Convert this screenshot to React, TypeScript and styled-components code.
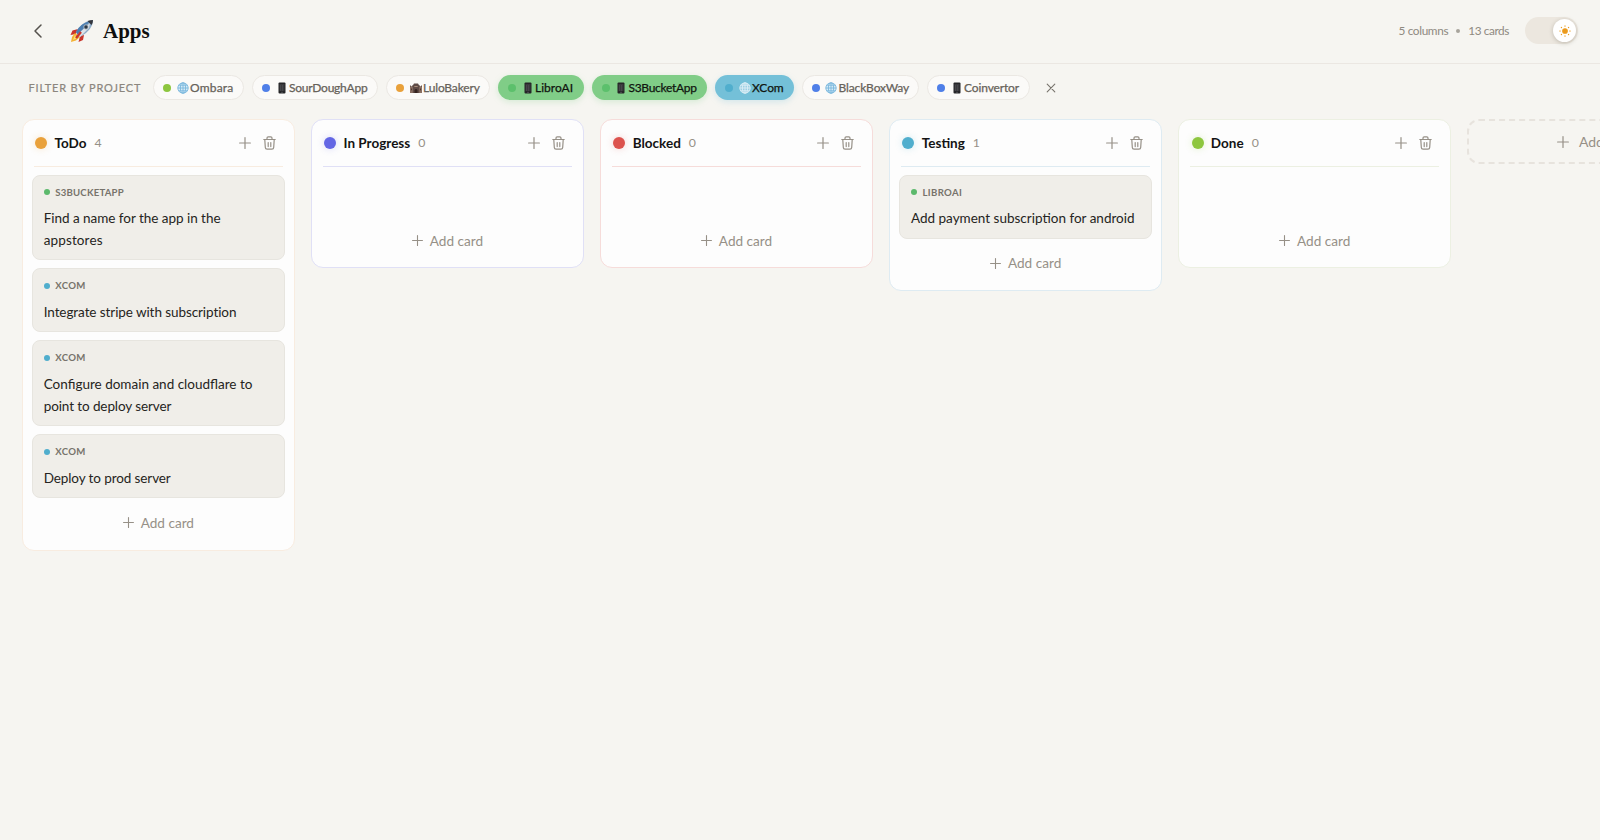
import React from "react";
import styled, { createGlobalStyle } from "styled-components";

const Global = createGlobalStyle`
  * { box-sizing: border-box; }
  body { margin: 0; background: #f6f5f1; font-family: Lato, sans-serif; overflow: hidden; }
  button { border: 0; background: none; padding: 0; font: inherit; color: inherit; display: flex; align-items: center; }
  svg { display: block; flex: none; }
`;

const Page = styled.div`
  height: 840px;
  width: 1600px;
  overflow: hidden;
  background: #f6f5f1;
`;
const Header = styled.header`
  height: 64px;
  border-bottom: 1px solid #ebe7e2;
  display: flex;
  align-items: center;
  padding: 0 22.5px 2px 30px;
`;
const Back = styled.button`
  width: 40px;
  color: #55524d;
`;
const Title = styled.h1`
  margin: 0 auto 0 9px;
  font: bold 21px/28px "Liberation Serif", serif;
  color: #0e0e0e;
`;
const Label = styled.span<{ $ls?: number }>`
  white-space: nowrap;
  letter-spacing: ${(p) => (p.$ls ? `${p.$ls}px` : "normal")};
`;
const Stats = styled.div`
  display: flex;
  align-items: center;
  gap: 8px;
  font-size: 11.8px;
  color: #8f8a81;
  margin-right: 15.5px;
`;
const StatDot = styled.i`
  width: 4px;
  height: 4px;
  border-radius: 50%;
  background: #a8a49c;
`;
const Toggle = styled.button`
  width: 53px;
  height: 27px;
  border-radius: 14px;
  background: #ece7df;
  justify-content: flex-end;
  padding-right: 1.5px;
`;
const Knob = styled.span`
  width: 23px;
  height: 23px;
  border-radius: 50%;
  background: #fff;
  box-shadow: 0 1px 4px rgba(60, 50, 30, 0.25);
  display: grid;
  place-items: center;
`;
const Filters = styled.div`
  height: 55px;
  display: flex;
  align-items: center;
  padding: 0 0 8px 28.5px;
`;
const FilterTitle = styled.div`
  width: 124.5px;
  font-size: 11px;
  color: #8b867e;
  -webkit-text-stroke: 0.2px currentColor;
`;
const Pill = styled.button<{ $w: number; $tone?: string }>`
  width: ${(p) => p.$w}px;
  height: 25px;
  margin-right: 8px;
  border-radius: 13px;
  padding-left: ${(p) => (p.$tone ? 10 : 9)}px;
  border: ${(p) => (p.$tone ? "0" : "1px solid #ebe8e3")};
  background: ${(p) => p.$tone ?? "#fbfaf8"};
  color: ${(p) => (p.$tone ? "#10150f" : "#67625a")};
  box-shadow: ${(p) => (p.$tone ? `0 2px 6px ${p.$tone}44` : "none")};
  font-size: 12px;
  -webkit-text-stroke: 0.25px currentColor;
`;
const PillDot = styled.i<{ $c: string }>`
  width: 8px;
  height: 8px;
  border-radius: 50%;
  background: ${(p) => p.$c};
  margin-right: 5px;
`;
const Glyph = styled.span`
  width: 13px;
  margin-right: 1px;
  display: grid;
  place-items: center;
`;
const Clear = styled.button`
  margin-left: 8.5px;
  color: #77736c;
`;
const Board = styled.main`
  display: flex;
  align-items: flex-start;
  gap: 15.8px;
  padding-left: 21.7px;
`;
const Column = styled.section<{ $edge: string }>`
  flex: 0 0 273.3px;
  border: 1px solid ${(p) => p.$edge};
  border-radius: 12px;
  background: #fdfdfd;
  padding: 0 9px 10.2px;
`;
const ColumnHead = styled.header<{ $edge: string }>`
  height: 46.5px;
  margin: 0 2px 8px;
  padding: 0 7px 0 1.5px;
  display: flex;
  align-items: center;
  border-bottom: 1px solid ${(p) => p.$edge};
  color: #969087;
`;
const StatusDot = styled.i<{ $c: string }>`
  width: 12px;
  height: 12px;
  border-radius: 50%;
  background: ${(p) => p.$c};
  box-shadow: 0 0 7px ${(p) => p.$c}40;
  margin-right: 7.3px;
`;
const Name = styled.h2`
  margin: 0 8px 0 0;
  font-size: 13.5px;
  font-weight: bold;
  color: #141414;
`;
const Count = styled.span`
  font-size: 12.3px;
  margin-right: auto;
`;
const HeadIcons = styled.div`
  display: flex;
  align-items: center;
  gap: 12px;
`;
const Cards = styled.div`
  min-height: 41.5px;
  display: flex;
  flex-direction: column;
  gap: 8px;
`;
const CardBox = styled.article`
  border: 1px solid #e7e5df;
  border-radius: 8px;
  background: #f0eee9;
  padding: 9.5px 11px 7.8px;
`;
const Tag = styled.div`
  height: 14px;
  display: flex;
  align-items: center;
  gap: 5.5px;
  font-size: 9.6px;
  font-weight: bold;
  color: #77736b;
`;
const TagDot = styled.i<{ $c: string }>`
  width: 6px;
  height: 6px;
  border-radius: 50%;
  background: ${(p) => p.$c};
`;
const CardText = styled.div`
  margin-top: 8.8px;
  display: flex;
  flex-direction: column;
  font-size: 13.5px;
  line-height: 21.9px;
  color: #252421;
`;
const AddCard = styled.button`
  width: 100%;
  height: 33px;
  margin-top: 8px;
  justify-content: center;
  gap: 7px;
  font-size: 13.6px;
  color: #969087;
`;
const AddColumn = styled.button`
  flex: 0 0 275px;
  height: 45px;
  border: 2px dashed #e7e3dd;
  border-radius: 12px;
  justify-content: center;
  gap: 10px;
  font-size: 14px;
  color: #969087;
`;

const Plus = ({ size = 12 }: { size?: number }) => (
  <svg width={size} height={size} viewBox="0 0 12 12" stroke="currentColor" strokeWidth="1.2" strokeLinecap="round">
    <path d="M6 .6v10.8M.6 6h10.8" />
  </svg>
);
const Trash = () => (
  <svg width="13" height="14" viewBox="0 0 13 14" fill="none" stroke="currentColor" strokeWidth="1.2" strokeLinecap="round" strokeLinejoin="round">
    <path d="M.8 3.5h11.4M4 3.3V2q0-1.2 1.2-1.2h2.6Q9 .8 9 2v1.3M1.8 3.7l.5 7.8q.1 1.7 1.8 1.7h4.8q1.7 0 1.8-1.7l.5-7.8M5.2 6.6v4M7.8 6.6v4" />
  </svg>
);
const Rocket = () => (
  <svg width="24" height="24" viewBox="0 0 24 24">
    <path d="M8 10 2.5 11.5.5 16l5.500-1zM14 16l-1 5-4.500 2 1.500-6z" fill="#c9352b" />
    <path d="m5 14-3 4-1 5 5-1.500 4-3.500z" fill="#f4b233" />
    <path d="m5 16-2 5 4-2z" fill="#fbe27a" />
    <path d="M6 13Q11 3 23 1q0 10-13 17z" fill="#8ba9c6" />
    <path d="M6 13Q11 4 20 2L8 16z" fill="#4d7eb0" />
    <path d="M8 15 20 4l-1 5-9 9z" fill="#dde3e8" />
    <path d="M17.5 2Q20 1 23 1q0 3-1.500 5z" fill="#33353c" />
    <circle cx="16" cy="8" r="2.2" fill="#2c3947" stroke="#c5ccd2" strokeWidth=".8" />
    <path d="m11 13-5 6" stroke="#c9352b" strokeWidth="2.4" />
  </svg>
);
const Globe = ({ light }: { light?: boolean }) => (
  <svg width="12" height="12" viewBox="0 0 12 12" fill="none">
    <circle cx="6" cy="6" r="5.3" fill={light ? "#9ed0e4" : "#d5ebf7"} />
    <g stroke={light ? "#e2f1f8" : "#71b3da"} strokeWidth=".8">
      <circle cx="6" cy="6" r="5.2" />
      <ellipse cx="6" cy="6" rx="2.6" ry="5.2" />
      <path d="M6 .8v10.4M.8 6h10.4M1.6 3.2h8.8M1.6 8.8h8.8" />
    </g>
  </svg>
);
const Phone = () => (
  <svg width="8" height="12" viewBox="0 0 8 12">
    <rect x=".5" y=".4" width="7" height="11.2" rx="1" fill="#252527" />
    <path d="M1.5 2h5v7h-5z" fill="#39393c" />
    <path d="M2 4h1M4 4h1M2 6h1M4 6h1M2 8h1M4 8h1M3 10.3h2" stroke="#606064" strokeWidth=".7" />
  </svg>
);
const Castle = () => (
  <svg width="12" height="12" viewBox="0 0 12 12">
    <path d="M0 4.5h3.2V11H0zM8.8 4.5H12V11H8.8z" fill="#8a6f62" />
    <path d="M2.8 3.5 4 1.5h4l1.2 2V11H2.8z" fill="#5e4a45" />
    <path d="M0 3.5h1v1h1v-1h1v1.5H0zM9 3.5h1v1h1v-1h1v1.5H9z" fill="#6b5650" />
    <path d="M4.5 11V8q1.5-1.8 3 0v3z" fill="#35221f" />
    <path d="M4.3 4.5h3.4" stroke="#a98c7a" />
    <path d="M1.5 6.5v1.8M10.5 6.5v1.8" stroke="#4c3833" />
  </svg>
);
const Sun = () => (
  <svg width="12" height="12" viewBox="0 0 12 12" fill="#eb9a1c" stroke="#eb9a1c" strokeWidth="1.1" strokeLinecap="round">
    <circle cx="6" cy="6" r="2.3" />
    <path d="M6 .8v.5M6 10.7v.5M.8 6h.5M10.7 6h.5M2.3 2.3l.3.3M9.4 9.4l.3.3M9.7 2.3l-.3.3M2.6 9.4l-.3.3" />
  </svg>
);

const glyphs = { globe: <Globe />, light: <Globe light />, phone: <Phone />, castle: <Castle /> };
type Project = { name: string; w: number; dot: string; glyph: keyof typeof glyphs; tone?: string; ls?: number };
const GREEN = "#80cd87";
const projects: Project[] = [
  { name: "Ombara", w: 91, dot: "#8dc63f", glyph: "globe", ls: 0.2 },
  { name: "SourDoughApp", w: 126, dot: "#4f7fe8", glyph: "phone", ls: -0.24 },
  { name: "LuloBakery", w: 104, dot: "#e9a13b", glyph: "castle", ls: -0.15 },
  { name: "LibroAI", w: 85.5, dot: "#5cc06c", glyph: "phone", tone: GREEN },
  { name: "S3BucketApp", w: 115.5, dot: "#5cc06c", glyph: "phone", tone: GREEN, ls: -0.3 },
  { name: "XCom", w: 78.5, dot: "#50aecd", glyph: "light", tone: "#74c0d8", ls: -0.1 },
  { name: "BlackBoxWay", w: 117.5, dot: "#4f7fe8", glyph: "globe", ls: -0.13 },
  { name: "Coinvertor", w: 102.5, dot: "#4f7fe8", glyph: "phone", ls: -0.13 },
];
type Line = { text: string; ls?: number };
type Card = { project: string; tagLs: number; dot: string; lines: Line[] };
const xcom = (...lines: Line[]): Card => ({ project: "XCOM", tagLs: 0.35, dot: "#50aecd", lines });
const columns: { name: string; dot: string; edge: string; cards: Card[] }[] = [
  {
    name: "ToDo", dot: "#e9a13b", edge: "#f8ece0",
    cards: [
      { project: "S3BUCKETAPP", tagLs: 0.22, dot: "#5cb96c", lines: [{ text: "Find a name for the app in the", ls: -0.03 }, { text: "appstores", ls: 0.13 }] },
      xcom({ text: "Integrate stripe with subscription", ls: -0.08 }),
      xcom({ text: "Configure domain and cloudflare to" }, { text: "point to deploy server", ls: -0.1 }),
      xcom({ text: "Deploy to prod server", ls: -0.1 }),
    ],
  },
  { name: "In Progress", dot: "#6366e4", edge: "#e0e0f6", cards: [] },
  { name: "Blocked", dot: "#dc524d", edge: "#f6dcda", cards: [] },
  { name: "Testing", dot: "#50aecd", edge: "#deebf2", cards: [{ project: "LIBROAI", tagLs: 0.35, dot: "#5cb96c", lines: [{ text: "Add payment subscription for android" }] }] },
  { name: "Done", dot: "#8dc63f", edge: "#ecf0e2", cards: [] },
];

export default function App() {
  return (
    <Page>
      <Global />
      <Header>
        <Back aria-label="Back">
          <svg width="16" height="16" viewBox="0 0 16 16" fill="none" stroke="currentColor" strokeWidth="1.5" strokeLinecap="round" strokeLinejoin="round">
            <path d="m11 2-6 6 6 6" />
          </svg>
        </Back>
        <Rocket />
        <Title>Apps</Title>
        <Stats>
          <Label $ls={-0.35}>5 columns</Label>
          <StatDot />
          <Label $ls={-0.4}>13 cards</Label>
        </Stats>
        <Toggle aria-label="Theme"><Knob><Sun /></Knob></Toggle>
      </Header>
      <Filters>
        <FilterTitle><Label $ls={0.8}>FILTER BY PROJECT</Label></FilterTitle>
        {projects.map((p) => (
          <Pill key={p.name} $w={p.w} $tone={p.tone}>
            <PillDot $c={p.dot} />
            <Glyph>{glyphs[p.glyph]}</Glyph>
            <Label $ls={p.ls}>{p.name}</Label>
          </Pill>
        ))}
        <Clear aria-label="Clear filters">
          <svg width="10" height="10" viewBox="0 0 10 10" stroke="currentColor" strokeWidth="1.1" strokeLinecap="round">
            <path d="m1.2 1.2 7.6 7.6M8.8 1.2 1.2 8.8" />
          </svg>
        </Clear>
      </Filters>
      <Board>
        {columns.map((c) => (
          <Column key={c.name} $edge={c.edge}>
            <ColumnHead $edge={c.edge}>
              <StatusDot $c={c.dot} />
              <Name><Label>{c.name}</Label></Name>
              <Count>{c.cards.length}</Count>
              <HeadIcons><Plus /><Trash /></HeadIcons>
            </ColumnHead>
            <Cards>
              {c.cards.map((card) => (
                <CardBox key={card.lines[0].text}>
                  <Tag><TagDot $c={card.dot} /><Label $ls={card.tagLs}>{card.project}</Label></Tag>
                  <CardText>{card.lines.map((l) => <Label key={l.text} $ls={l.ls}>{l.text}</Label>)}</CardText>
                </CardBox>
              ))}
            </Cards>
            <AddCard><Plus size={11} /><Label>Add card</Label></AddCard>
          </Column>
        ))}
        <AddColumn><Plus /><Label>Add column</Label></AddColumn>
      </Board>
    </Page>
  );
}
